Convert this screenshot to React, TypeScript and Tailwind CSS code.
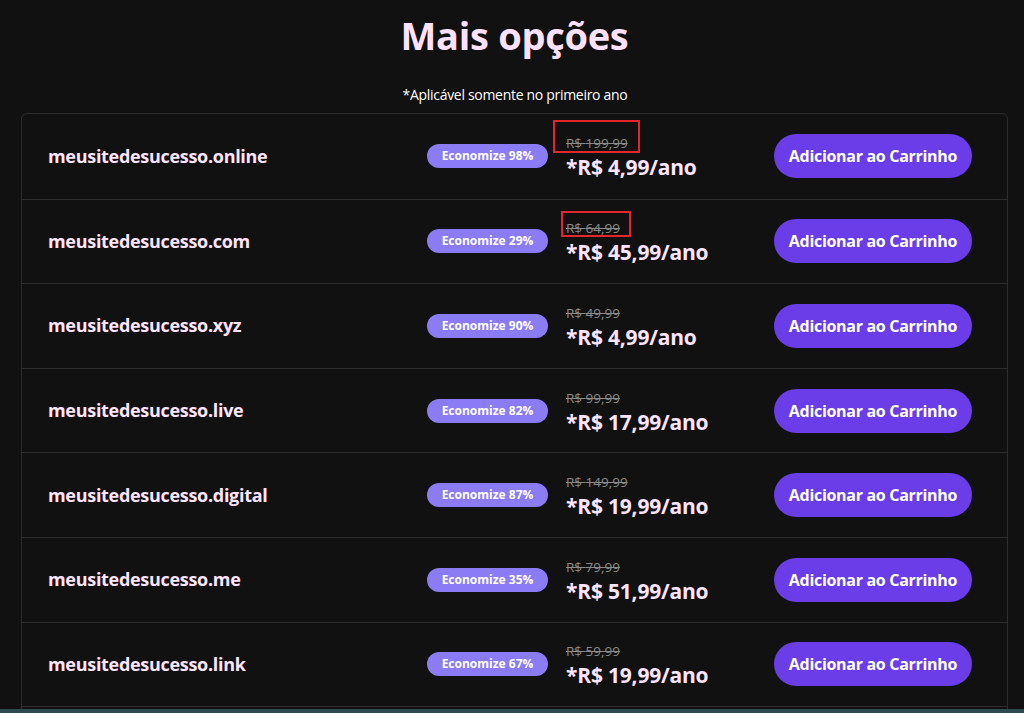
import React from "react";

type Option = {
    domain: string;
    discount: number;
    oldPrice: string;
    price: string;
    mark?: string;
};

const options: Option[] = [
    { domain: "meusitedesucesso.online", discount: 98, oldPrice: "199,99", price: "4,99", mark: "-left-[13px] -top-[15px] w-[87px] h-[33px]" },
    { domain: "meusitedesucesso.com", discount: 29, oldPrice: "64,99", price: "45,99", mark: "-left-[5px] -top-[9px] w-[70px] h-[26px]" },
    { domain: "meusitedesucesso.xyz", discount: 90, oldPrice: "49,99", price: "4,99" },
    { domain: "meusitedesucesso.live", discount: 82, oldPrice: "99,99", price: "17,99" },
    { domain: "meusitedesucesso.digital", discount: 87, oldPrice: "149,99", price: "19,99" },
    { domain: "meusitedesucesso.me", discount: 35, oldPrice: "79,99", price: "51,99" },
    { domain: "meusitedesucesso.link", discount: 67, oldPrice: "59,99", price: "19,99" },
];

export default function App() {
    return (
        <div className="h-[713px] overflow-hidden flex flex-col bg-[#111111] font-['Open_Sans','Noto_Sans',sans-serif]">
            <div className="flex-1 overflow-hidden px-[21px] pr-[16px]">
                <h1 className="text-center text-[38px] leading-[46px] font-bold text-[#fde2fd] pt-[12px] tracking-[-0.3px]">Mais opções</h1>
                <p className="text-center text-[14px] leading-[18px] text-white mt-[28px] pl-[1px] tracking-[-0.3px]">*Aplicável somente no primeiro ano</p>
                <div className="mt-[9px] border border-[#2c2c2c] rounded-[6px]">
                    {options.map((opt, idx) => (
                        <OptionRow option={opt} idx={idx} key={idx} />
                    ))}
                    <div className="border-t border-[#2c2c2c] h-[84.6px]" />
                </div>
            </div>
            <div className="h-[4px] bg-[#2f4a4f]" />
        </div>
    );
}

const OptionRow: React.FC<{ option: Option; idx: number }> = ({ option, idx }) => {
    const { domain, discount, oldPrice, price, mark } = option;

    return (
        <div className={`${idx > 0 ? "border-t border-[#2c2c2c]" : ""} h-[84.6px] flex items-center pl-[26px] pr-[35px]`}>
            <span className="flex-1 text-[18px] font-bold text-[#fde4ff] tracking-[-0.3px]">{domain}</span>
            <span className="w-[121px] h-[24px] rounded-full bg-[#8b7cf6] text-white text-[12px] font-bold flex items-center justify-center">
                Economize {discount}%
            </span>
            <div className="w-[208px] ml-[18px] flex flex-col pt-[5px]">
                <span className="relative self-start text-[13.5px] leading-[16px] text-[#8a8a8a] line-through">
                    R$ {oldPrice}
                    {mark && <span className={`absolute ${mark} border-2 border-[#e3262b]`} />}
                </span>
                <span className="text-[21px] leading-[30px] font-bold text-[#fde4ff] mt-[1px] tracking-[-0.2px]">*R$ {price}/ano</span>
            </div>
            <button className="w-[198px] h-[44px] rounded-full bg-[#6a3de8] text-white text-[16px] font-bold tracking-[-0.3px]">
                Adicionar ao Carrinho
            </button>
        </div>
    );
};
